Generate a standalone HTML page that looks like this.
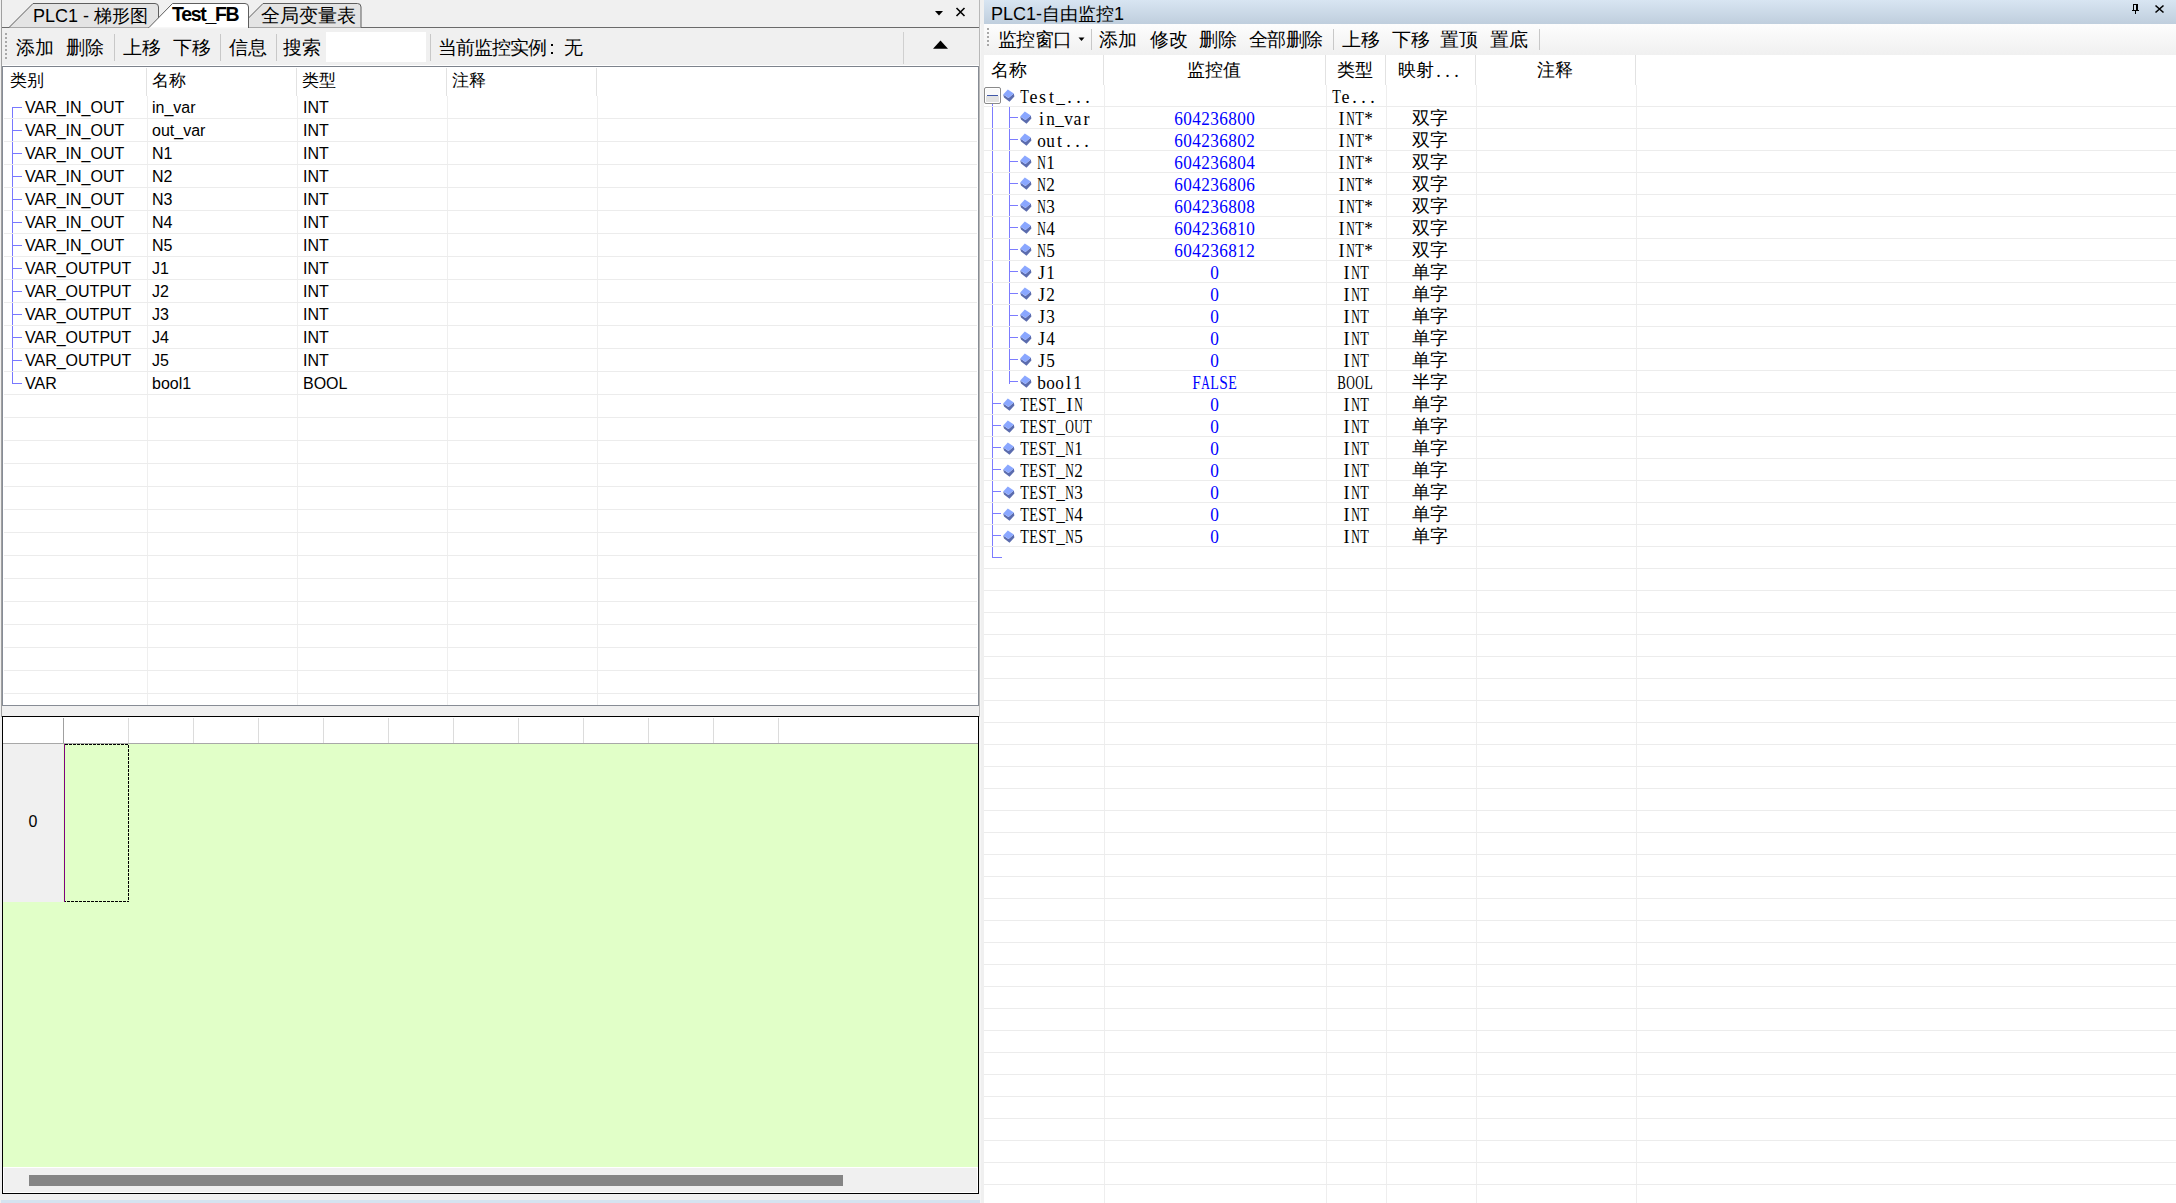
<!DOCTYPE html>
<html><head><meta charset="utf-8"><title>PLC</title>
<style>
html,body{margin:0;padding:0;}
body{width:2176px;height:1203px;overflow:hidden;position:relative;background:#f0f0f0;font-family:"Liberation Sans",sans-serif;color:#000;}
div{position:absolute;box-sizing:border-box;}
.tb{font-size:18px;line-height:24px;white-space:nowrap;}
.bt{font-size:19px;line-height:24px;white-space:nowrap;}
.lt{font-size:16px;line-height:23px;white-space:nowrap;}
.lh{font-size:16px;line-height:22px;white-space:nowrap;}
.rm{font-family:"Liberation Mono",monospace;font-size:18px;line-height:22px;white-space:nowrap;transform:scaleX(0.8333);transform-origin:0 0;}
.rc{font-size:18px;line-height:22px;white-space:nowrap;}
.blue{color:#0000ff;}
.rd{font-family:"Liberation Serif",serif;font-size:18px;line-height:22px;white-space:nowrap;}
svg{position:absolute;}
</style></head><body>

<div style="left:1px;top:0px;width:1px;height:717px;background:#a0a0a0"></div>
<svg style="left:0;top:0" width="980" height="30" viewBox="0 0 980 30">
<path d="M2 27.5 H979" stroke="#6a6a6a" stroke-width="1" fill="none"/>
<path d="M9 27.5 L33 3.5 H155 Q158.5 3.5 158.5 7 V27.5" fill="#e4e4e4" stroke="#5e5e5e" stroke-width="1"/>
<path d="M239 27.5 L263 3.5 H357.5 Q361 3.5 361 7 V27.5" fill="#e4e4e4" stroke="#5e5e5e" stroke-width="1"/>
<path d="M148.5 28 L172.5 3.5 H245 Q248.5 3.5 248.5 7 V28" fill="#ffffff" stroke="#5e5e5e" stroke-width="1"/>
<path d="M149.5 28 H248" stroke="#f4f4f4" stroke-width="1.5"/>
<path d="M935 11 H943 L939 15.5 Z" fill="#000"/>
<path d="M956.5 8 L964.5 16 M964.5 8 L956.5 16" stroke="#000" stroke-width="1.6"/>
</svg>
<div class="tb" style="left:33px;top:4px;">PLC1 - 梯形图</div>
<div class="tb" style="left:172px;top:2px;font-weight:bold;font-size:19.5px;letter-spacing:-1.3px">Test_FB</div>
<div class="tb" style="left:261px;top:4px;font-size:18.5px">全局变量表</div>
<div style="left:5px;top:33px;width:2px;height:2px;background:#a8a8a8"></div>
<div style="left:5px;top:37px;width:2px;height:2px;background:#a8a8a8"></div>
<div style="left:5px;top:41px;width:2px;height:2px;background:#a8a8a8"></div>
<div style="left:5px;top:45px;width:2px;height:2px;background:#a8a8a8"></div>
<div style="left:5px;top:49px;width:2px;height:2px;background:#a8a8a8"></div>
<div style="left:5px;top:53px;width:2px;height:2px;background:#a8a8a8"></div>
<div style="left:5px;top:57px;width:2px;height:2px;background:#a8a8a8"></div>
<div class="bt" style="left:16px;top:36px;">添加</div>
<div class="bt" style="left:66px;top:36px;">删除</div>
<div class="bt" style="left:123px;top:36px;">上移</div>
<div class="bt" style="left:173px;top:36px;">下移</div>
<div class="bt" style="left:229px;top:36px;">信息</div>
<div class="bt" style="left:283px;top:36px;">搜索</div>
<div class="bt" style="left:438px;top:36px;letter-spacing:-1.1px">当前监控实例</div>
<div style="left:550.5px;top:44px;width:2px;height:2px;background:#000"></div>
<div style="left:550.5px;top:52px;width:2px;height:2px;background:#000"></div>
<div class="bt" style="left:564px;top:36px;">无</div>
<div style="left:114px;top:34px;width:1px;height:27px;background:#c8c8c8"></div>
<div style="left:220px;top:34px;width:1px;height:27px;background:#c8c8c8"></div>
<div style="left:276px;top:34px;width:1px;height:27px;background:#c8c8c8"></div>
<div style="left:430px;top:34px;width:1px;height:27px;background:#c8c8c8"></div>
<div style="left:903px;top:32px;width:1px;height:32px;background:#d0d0d0"></div>
<div style="left:326px;top:32px;width:100px;height:30px;background:#ffffff"></div>
<svg style="left:930px;top:38px" width="20" height="14"><path d="M3 10.8 L10.5 2.5 L18 10.8 Z" fill="#000"/></svg>
<div style="left:2px;top:65px;width:977px;height:1px;background:#ffffff"></div>
<div style="left:2px;top:66px;width:977px;height:1px;background:#7d838c"></div>
<div style="left:2px;top:67px;width:976px;height:638px;background:#ffffff"></div>
<div style="left:2px;top:66px;width:1px;height:640px;background:#868c96"></div>
<div style="left:978px;top:66px;width:1px;height:640px;background:#878c95"></div>
<div style="left:2px;top:705px;width:977px;height:1px;background:#878c95"></div>
<div style="left:979px;top:0px;width:1px;height:717px;background:#b8b8b8"></div>
<div style="left:10px;top:70px;font-size:17px;line-height:22px">类别</div>
<div style="left:152px;top:70px;font-size:17px;line-height:22px">名称</div>
<div style="left:302px;top:70px;font-size:17px;line-height:22px">类型</div>
<div style="left:452px;top:70px;font-size:17px;line-height:22px">注释</div>
<div style="left:146px;top:68px;width:1px;height:28px;background:#e2e2e2"></div>
<div style="left:296px;top:68px;width:1px;height:28px;background:#e2e2e2"></div>
<div style="left:446px;top:68px;width:1px;height:28px;background:#e2e2e2"></div>
<div style="left:596px;top:68px;width:1px;height:28px;background:#e2e2e2"></div>
<div style="left:147px;top:96px;width:1px;height:609px;background:#efefef"></div>
<div style="left:297px;top:96px;width:1px;height:609px;background:#efefef"></div>
<div style="left:447px;top:96px;width:1px;height:609px;background:#efefef"></div>
<div style="left:597px;top:96px;width:1px;height:609px;background:#efefef"></div>
<div style="left:4px;top:118px;width:973px;height:1px;background:#ececec"></div>
<div style="left:4px;top:141px;width:973px;height:1px;background:#ececec"></div>
<div style="left:4px;top:164px;width:973px;height:1px;background:#ececec"></div>
<div style="left:4px;top:187px;width:973px;height:1px;background:#ececec"></div>
<div style="left:4px;top:210px;width:973px;height:1px;background:#ececec"></div>
<div style="left:4px;top:233px;width:973px;height:1px;background:#ececec"></div>
<div style="left:4px;top:256px;width:973px;height:1px;background:#ececec"></div>
<div style="left:4px;top:279px;width:973px;height:1px;background:#ececec"></div>
<div style="left:4px;top:302px;width:973px;height:1px;background:#ececec"></div>
<div style="left:4px;top:325px;width:973px;height:1px;background:#ececec"></div>
<div style="left:4px;top:348px;width:973px;height:1px;background:#ececec"></div>
<div style="left:4px;top:371px;width:973px;height:1px;background:#ececec"></div>
<div style="left:4px;top:394px;width:973px;height:1px;background:#ececec"></div>
<div style="left:4px;top:417px;width:973px;height:1px;background:#ececec"></div>
<div style="left:4px;top:440px;width:973px;height:1px;background:#ececec"></div>
<div style="left:4px;top:463px;width:973px;height:1px;background:#ececec"></div>
<div style="left:4px;top:486px;width:973px;height:1px;background:#ececec"></div>
<div style="left:4px;top:509px;width:973px;height:1px;background:#ececec"></div>
<div style="left:4px;top:532px;width:973px;height:1px;background:#ececec"></div>
<div style="left:4px;top:555px;width:973px;height:1px;background:#ececec"></div>
<div style="left:4px;top:578px;width:973px;height:1px;background:#ececec"></div>
<div style="left:4px;top:601px;width:973px;height:1px;background:#ececec"></div>
<div style="left:4px;top:624px;width:973px;height:1px;background:#ececec"></div>
<div style="left:4px;top:647px;width:973px;height:1px;background:#ececec"></div>
<div style="left:4px;top:670px;width:973px;height:1px;background:#ececec"></div>
<div style="left:4px;top:693px;width:973px;height:1px;background:#ececec"></div>
<div class="lt" style="left:25px;top:96px;">VAR_IN_OUT</div>
<div class="lt" style="left:152px;top:96px;">in_var</div>
<div class="lt" style="left:303px;top:96px;">INT</div>
<div style="left:12px;top:107px;width:10px;height:1px;background:#7878ff"></div>
<div class="lt" style="left:25px;top:119px;">VAR_IN_OUT</div>
<div class="lt" style="left:152px;top:119px;">out_var</div>
<div class="lt" style="left:303px;top:119px;">INT</div>
<div style="left:12px;top:130px;width:10px;height:1px;background:#7878ff"></div>
<div class="lt" style="left:25px;top:142px;">VAR_IN_OUT</div>
<div class="lt" style="left:152px;top:142px;">N1</div>
<div class="lt" style="left:303px;top:142px;">INT</div>
<div style="left:12px;top:153px;width:10px;height:1px;background:#7878ff"></div>
<div class="lt" style="left:25px;top:165px;">VAR_IN_OUT</div>
<div class="lt" style="left:152px;top:165px;">N2</div>
<div class="lt" style="left:303px;top:165px;">INT</div>
<div style="left:12px;top:176px;width:10px;height:1px;background:#7878ff"></div>
<div class="lt" style="left:25px;top:188px;">VAR_IN_OUT</div>
<div class="lt" style="left:152px;top:188px;">N3</div>
<div class="lt" style="left:303px;top:188px;">INT</div>
<div style="left:12px;top:199px;width:10px;height:1px;background:#7878ff"></div>
<div class="lt" style="left:25px;top:211px;">VAR_IN_OUT</div>
<div class="lt" style="left:152px;top:211px;">N4</div>
<div class="lt" style="left:303px;top:211px;">INT</div>
<div style="left:12px;top:222px;width:10px;height:1px;background:#7878ff"></div>
<div class="lt" style="left:25px;top:234px;">VAR_IN_OUT</div>
<div class="lt" style="left:152px;top:234px;">N5</div>
<div class="lt" style="left:303px;top:234px;">INT</div>
<div style="left:12px;top:245px;width:10px;height:1px;background:#7878ff"></div>
<div class="lt" style="left:25px;top:257px;">VAR_OUTPUT</div>
<div class="lt" style="left:152px;top:257px;">J1</div>
<div class="lt" style="left:303px;top:257px;">INT</div>
<div style="left:12px;top:268px;width:10px;height:1px;background:#7878ff"></div>
<div class="lt" style="left:25px;top:280px;">VAR_OUTPUT</div>
<div class="lt" style="left:152px;top:280px;">J2</div>
<div class="lt" style="left:303px;top:280px;">INT</div>
<div style="left:12px;top:291px;width:10px;height:1px;background:#7878ff"></div>
<div class="lt" style="left:25px;top:303px;">VAR_OUTPUT</div>
<div class="lt" style="left:152px;top:303px;">J3</div>
<div class="lt" style="left:303px;top:303px;">INT</div>
<div style="left:12px;top:314px;width:10px;height:1px;background:#7878ff"></div>
<div class="lt" style="left:25px;top:326px;">VAR_OUTPUT</div>
<div class="lt" style="left:152px;top:326px;">J4</div>
<div class="lt" style="left:303px;top:326px;">INT</div>
<div style="left:12px;top:337px;width:10px;height:1px;background:#7878ff"></div>
<div class="lt" style="left:25px;top:349px;">VAR_OUTPUT</div>
<div class="lt" style="left:152px;top:349px;">J5</div>
<div class="lt" style="left:303px;top:349px;">INT</div>
<div style="left:12px;top:360px;width:10px;height:1px;background:#7878ff"></div>
<div class="lt" style="left:25px;top:372px;">VAR</div>
<div class="lt" style="left:152px;top:372px;">bool1</div>
<div class="lt" style="left:303px;top:372px;">BOOL</div>
<div style="left:12px;top:383px;width:10px;height:1px;background:#7878ff"></div>
<div style="left:12px;top:107px;width:1px;height:277px;background:#7878ff"></div>
<div style="left:12px;top:118px;width:1px;height:1px;background:#ececec"></div>
<div style="left:12px;top:141px;width:1px;height:1px;background:#ececec"></div>
<div style="left:12px;top:164px;width:1px;height:1px;background:#ececec"></div>
<div style="left:12px;top:187px;width:1px;height:1px;background:#ececec"></div>
<div style="left:12px;top:210px;width:1px;height:1px;background:#ececec"></div>
<div style="left:12px;top:233px;width:1px;height:1px;background:#ececec"></div>
<div style="left:12px;top:256px;width:1px;height:1px;background:#ececec"></div>
<div style="left:12px;top:279px;width:1px;height:1px;background:#ececec"></div>
<div style="left:12px;top:302px;width:1px;height:1px;background:#ececec"></div>
<div style="left:12px;top:325px;width:1px;height:1px;background:#ececec"></div>
<div style="left:12px;top:348px;width:1px;height:1px;background:#ececec"></div>
<div style="left:12px;top:371px;width:1px;height:1px;background:#ececec"></div>
<div style="left:2px;top:716px;width:977px;height:478px;background:#000"></div>
<div style="left:3px;top:717px;width:975px;height:476px;background:#ffffff"></div>
<div style="left:4px;top:718px;width:973px;height:25px;background:#ffffff"></div>
<div style="left:3px;top:743px;width:975px;height:1px;background:#a8a8a8"></div>
<div style="left:63px;top:718px;width:1px;height:25px;background:#a0a0a0"></div>
<div style="left:128px;top:718px;width:1px;height:25px;background:#dcdcdc"></div>
<div style="left:193px;top:718px;width:1px;height:25px;background:#dcdcdc"></div>
<div style="left:258px;top:718px;width:1px;height:25px;background:#dcdcdc"></div>
<div style="left:323px;top:718px;width:1px;height:25px;background:#dcdcdc"></div>
<div style="left:388px;top:718px;width:1px;height:25px;background:#dcdcdc"></div>
<div style="left:453px;top:718px;width:1px;height:25px;background:#dcdcdc"></div>
<div style="left:518px;top:718px;width:1px;height:25px;background:#dcdcdc"></div>
<div style="left:583px;top:718px;width:1px;height:25px;background:#dcdcdc"></div>
<div style="left:648px;top:718px;width:1px;height:25px;background:#dcdcdc"></div>
<div style="left:713px;top:718px;width:1px;height:25px;background:#dcdcdc"></div>
<div style="left:778px;top:718px;width:1px;height:25px;background:#dcdcdc"></div>
<div style="left:3px;top:744px;width:975px;height:423px;background:#e1ffc8"></div>
<div style="left:3px;top:744px;width:60px;height:158px;background:#f0f0f0"></div>
<div style="left:3px;top:810px;width:60px;text-align:center;font-size:16px;line-height:24px">0</div>
<svg style="left:60px;top:740px" width="75" height="170"><path d="M4.5 4.5 H68.5 V161.5 H4.5" fill="none" stroke="#000" stroke-width="1" stroke-dasharray="3 1" shape-rendering="crispEdges"/><path d="M4.5 4 V162" stroke="#800080" stroke-width="1" shape-rendering="crispEdges"/></svg>
<div style="left:3px;top:1167px;width:975px;height:1px;background:#ffffff"></div>
<div style="left:4px;top:1168px;width:973px;height:24px;background:#f0f0f0"></div>
<div style="left:29px;top:1175px;width:814px;height:11px;background:#858585"></div>
<div style="left:1px;top:1200px;width:979px;height:3px;background:#d5e3f0"></div>
<div style="left:980px;top:0px;width:4px;height:1203px;background:#f0f0f0"></div>
<div style="left:980px;top:24px;width:1px;height:1179px;background:#f6f6f6"></div>
<div style="left:984px;top:0px;width:1192px;height:24px;background:linear-gradient(#d8e5f2,#bfcedd)"></div>
<div class="tb" style="left:991px;top:2px;">PLC1-自由监控1</div>
<svg style="left:2125px;top:0" width="51" height="24">
<g shape-rendering="crispEdges"><rect x="8" y="4" width="5" height="6" fill="#000"/><rect x="9" y="5" width="2" height="5" fill="#d3dfeb"/><rect x="7" y="10" width="7" height="1" fill="#000"/><rect x="10" y="11" width="1" height="3" fill="#000"/></g>
<path d="M30.5 5.5 L38.5 12.5 M38.5 5.5 L30.5 12.5" stroke="#000" stroke-width="1.6"/>
</svg>
<div style="left:984px;top:24px;width:1192px;height:31px;background:linear-gradient(#fdfdfd,#f0f0f0)"></div>
<div style="left:987px;top:28px;width:2px;height:2px;background:#a8a8a8"></div>
<div style="left:987px;top:32px;width:2px;height:2px;background:#a8a8a8"></div>
<div style="left:987px;top:36px;width:2px;height:2px;background:#a8a8a8"></div>
<div style="left:987px;top:40px;width:2px;height:2px;background:#a8a8a8"></div>
<div style="left:987px;top:44px;width:2px;height:2px;background:#a8a8a8"></div>
<div class="bt" style="left:998px;top:28px;letter-spacing:-0.6px">监控窗口</div>
<div class="bt" style="left:1099px;top:28px;">添加</div>
<div class="bt" style="left:1150px;top:28px;">修改</div>
<div class="bt" style="left:1199px;top:28px;">删除</div>
<div class="bt" style="left:1249px;top:28px;letter-spacing:-0.6px">全部删除</div>
<div class="bt" style="left:1342px;top:28px;">上移</div>
<div class="bt" style="left:1392px;top:28px;">下移</div>
<div class="bt" style="left:1440px;top:28px;">置顶</div>
<div class="bt" style="left:1490px;top:28px;">置底</div>
<svg style="left:1076px;top:34px" width="12" height="10"><path d="M2.5 3.5 H8.5 L5.5 7 Z" fill="#000"/></svg>
<div style="left:1091px;top:29px;width:1px;height:21px;background:#c8c8c8"></div>
<div style="left:1333px;top:29px;width:1px;height:21px;background:#c8c8c8"></div>
<div style="left:1539px;top:29px;width:1px;height:21px;background:#c8c8c8"></div>
<div style="left:984px;top:55px;width:1192px;height:1148px;background:#ffffff"></div>
<div style="left:1103px;top:55px;width:1px;height:30px;background:#e2e2e2"></div>
<div style="left:1325px;top:55px;width:1px;height:30px;background:#e2e2e2"></div>
<div style="left:1385px;top:55px;width:1px;height:30px;background:#e2e2e2"></div>
<div style="left:1475px;top:55px;width:1px;height:30px;background:#e2e2e2"></div>
<div style="left:1635px;top:55px;width:1px;height:30px;background:#e2e2e2"></div>
<div style="left:1104px;top:85px;width:1px;height:1118px;background:#eeeeee"></div>
<div style="left:1326px;top:85px;width:1px;height:1118px;background:#eeeeee"></div>
<div style="left:1386px;top:85px;width:1px;height:1118px;background:#eeeeee"></div>
<div style="left:1476px;top:85px;width:1px;height:1118px;background:#eeeeee"></div>
<div style="left:1636px;top:85px;width:1px;height:1118px;background:#eeeeee"></div>
<div style="left:984px;top:106px;width:1192px;height:1px;background:#ececec"></div>
<div style="left:984px;top:128px;width:1192px;height:1px;background:#ececec"></div>
<div style="left:984px;top:150px;width:1192px;height:1px;background:#ececec"></div>
<div style="left:984px;top:172px;width:1192px;height:1px;background:#ececec"></div>
<div style="left:984px;top:194px;width:1192px;height:1px;background:#ececec"></div>
<div style="left:984px;top:216px;width:1192px;height:1px;background:#ececec"></div>
<div style="left:984px;top:238px;width:1192px;height:1px;background:#ececec"></div>
<div style="left:984px;top:260px;width:1192px;height:1px;background:#ececec"></div>
<div style="left:984px;top:282px;width:1192px;height:1px;background:#ececec"></div>
<div style="left:984px;top:304px;width:1192px;height:1px;background:#ececec"></div>
<div style="left:984px;top:326px;width:1192px;height:1px;background:#ececec"></div>
<div style="left:984px;top:348px;width:1192px;height:1px;background:#ececec"></div>
<div style="left:984px;top:370px;width:1192px;height:1px;background:#ececec"></div>
<div style="left:984px;top:392px;width:1192px;height:1px;background:#ececec"></div>
<div style="left:984px;top:414px;width:1192px;height:1px;background:#ececec"></div>
<div style="left:984px;top:436px;width:1192px;height:1px;background:#ececec"></div>
<div style="left:984px;top:458px;width:1192px;height:1px;background:#ececec"></div>
<div style="left:984px;top:480px;width:1192px;height:1px;background:#ececec"></div>
<div style="left:984px;top:502px;width:1192px;height:1px;background:#ececec"></div>
<div style="left:984px;top:524px;width:1192px;height:1px;background:#ececec"></div>
<div style="left:984px;top:546px;width:1192px;height:1px;background:#ececec"></div>
<div style="left:984px;top:568px;width:1192px;height:1px;background:#ececec"></div>
<div style="left:984px;top:590px;width:1192px;height:1px;background:#ececec"></div>
<div style="left:984px;top:612px;width:1192px;height:1px;background:#ececec"></div>
<div style="left:984px;top:634px;width:1192px;height:1px;background:#ececec"></div>
<div style="left:984px;top:656px;width:1192px;height:1px;background:#ececec"></div>
<div style="left:984px;top:678px;width:1192px;height:1px;background:#ececec"></div>
<div style="left:984px;top:700px;width:1192px;height:1px;background:#ececec"></div>
<div style="left:984px;top:722px;width:1192px;height:1px;background:#ececec"></div>
<div style="left:984px;top:744px;width:1192px;height:1px;background:#ececec"></div>
<div style="left:984px;top:766px;width:1192px;height:1px;background:#ececec"></div>
<div style="left:984px;top:788px;width:1192px;height:1px;background:#ececec"></div>
<div style="left:984px;top:810px;width:1192px;height:1px;background:#ececec"></div>
<div style="left:984px;top:832px;width:1192px;height:1px;background:#ececec"></div>
<div style="left:984px;top:854px;width:1192px;height:1px;background:#ececec"></div>
<div style="left:984px;top:876px;width:1192px;height:1px;background:#ececec"></div>
<div style="left:984px;top:898px;width:1192px;height:1px;background:#ececec"></div>
<div style="left:984px;top:920px;width:1192px;height:1px;background:#ececec"></div>
<div style="left:984px;top:942px;width:1192px;height:1px;background:#ececec"></div>
<div style="left:984px;top:964px;width:1192px;height:1px;background:#ececec"></div>
<div style="left:984px;top:986px;width:1192px;height:1px;background:#ececec"></div>
<div style="left:984px;top:1008px;width:1192px;height:1px;background:#ececec"></div>
<div style="left:984px;top:1030px;width:1192px;height:1px;background:#ececec"></div>
<div style="left:984px;top:1052px;width:1192px;height:1px;background:#ececec"></div>
<div style="left:984px;top:1074px;width:1192px;height:1px;background:#ececec"></div>
<div style="left:984px;top:1096px;width:1192px;height:1px;background:#ececec"></div>
<div style="left:984px;top:1118px;width:1192px;height:1px;background:#ececec"></div>
<div style="left:984px;top:1140px;width:1192px;height:1px;background:#ececec"></div>
<div style="left:984px;top:1162px;width:1192px;height:1px;background:#ececec"></div>
<div style="left:984px;top:1184px;width:1192px;height:1px;background:#ececec"></div>
<div class="rc" style="left:991px;top:59px;">名称</div>
<div class="rc" style="left:1187px;top:59px;">监控值</div>
<div class="rc" style="left:1337px;top:59px;">类型</div>
<div class="rc" style="left:1398px;top:59px;">映射</div>
<svg style="left:1434px;top:59px" width="31" height="22" font-family="Liberation Serif" font-size="18" fill="#000"><text transform="translate(4.5 0) scale(1.000 1)" x="-2.25" y="17.6">.</text><text transform="translate(13.5 0) scale(1.000 1)" x="-2.25" y="17.6">.</text><text transform="translate(22.5 0) scale(1.000 1)" x="-2.25" y="17.6">.</text></svg>
<div class="rc" style="left:1537px;top:59px;">注释</div>
<div style="left:984px;top:87px;width:17px;height:17px;border:1px solid #8a8a8a;border-radius:2px;background:#fff"></div>
<div style="left:986px;top:89px;width:13px;height:7px;background:#fafafa"></div>
<div style="left:986px;top:96px;width:13px;height:6px;background:#e3e3e3"></div>
<div style="left:987px;top:95px;width:11px;height:1px;background:#4058a8"></div>
<svg style="left:1003px;top:89.3px" width="13" height="14"><path d="M0.2 5.5 L5.5 9 L10.8 4.5 L11.4 7.5 L6.5 12.8 L1 8.5 Z" fill="#5b6cae"/><path d="M4.8 0.6 L10.8 4.5 L5.5 9 L0.2 5.5 Z" fill="#8aa7ff"/></svg>
<svg style="left:1020px;top:85px" width="76" height="22" font-family="Liberation Serif" font-size="18" fill="#000"><text transform="translate(4.5 0) scale(0.782 1)" x="-5.5" y="17.6">T</text><text transform="translate(13.5 0) scale(1.000 1)" x="-4.0" y="17.6">e</text><text transform="translate(22.5 0) scale(1.000 1)" x="-3.5078125" y="17.6">s</text><text transform="translate(31.5 0) scale(1.000 1)" x="-2.5078125" y="17.6">t</text><text transform="translate(40.5 0) scale(0.956 1)" x="-4.5" y="17.6">_</text><text transform="translate(49.5 0) scale(1.000 1)" x="-2.25" y="17.6">.</text><text transform="translate(58.5 0) scale(1.000 1)" x="-2.25" y="17.6">.</text><text transform="translate(67.5 0) scale(1.000 1)" x="-2.25" y="17.6">.</text></svg>
<svg style="left:1332px;top:85px" width="49" height="22" font-family="Liberation Serif" font-size="18" fill="#000"><text transform="translate(4.5 0) scale(0.782 1)" x="-5.5" y="17.6">T</text><text transform="translate(13.5 0) scale(1.000 1)" x="-4.0" y="17.6">e</text><text transform="translate(22.5 0) scale(1.000 1)" x="-2.25" y="17.6">.</text><text transform="translate(31.5 0) scale(1.000 1)" x="-2.25" y="17.6">.</text><text transform="translate(40.5 0) scale(1.000 1)" x="-2.25" y="17.6">.</text></svg>
<div style="left:1009px;top:117px;width:9px;height:1px;background:#7c7cff"></div>
<svg style="left:1020px;top:111px" width="13" height="14"><path d="M0.2 5.5 L5.5 9 L10.8 4.5 L11.4 7.5 L6.5 12.8 L1 8.5 Z" fill="#5b6cae"/><path d="M4.8 0.6 L10.8 4.5 L5.5 9 L0.2 5.5 Z" fill="#8aa7ff"/></svg>
<svg style="left:1037px;top:107px" width="58" height="22" font-family="Liberation Serif" font-size="18" fill="#000"><text transform="translate(4.5 0) scale(1.000 1)" x="-2.5078125" y="17.6">i</text><text transform="translate(13.5 0) scale(0.956 1)" x="-4.5" y="17.6">n</text><text transform="translate(22.5 0) scale(0.956 1)" x="-4.5" y="17.6">_</text><text transform="translate(31.5 0) scale(0.956 1)" x="-4.5" y="17.6">v</text><text transform="translate(40.5 0) scale(1.000 1)" x="-4.0" y="17.6">a</text><text transform="translate(49.5 0) scale(1.000 1)" x="-3.0" y="17.6">r</text></svg>
<svg style="left:1174px;top:107px" width="85" height="22" font-family="Liberation Serif" font-size="18" fill="#0000ff"><text transform="translate(4.5 0) scale(0.956 1)" x="-4.5" y="17.6">6</text><text transform="translate(13.5 0) scale(0.956 1)" x="-4.5" y="17.6">0</text><text transform="translate(22.5 0) scale(0.956 1)" x="-4.5" y="17.6">4</text><text transform="translate(31.5 0) scale(0.956 1)" x="-4.5" y="17.6">2</text><text transform="translate(40.5 0) scale(0.956 1)" x="-4.5" y="17.6">3</text><text transform="translate(49.5 0) scale(0.956 1)" x="-4.5" y="17.6">6</text><text transform="translate(58.5 0) scale(0.956 1)" x="-4.5" y="17.6">8</text><text transform="translate(67.5 0) scale(0.956 1)" x="-4.5" y="17.6">0</text><text transform="translate(76.5 0) scale(0.956 1)" x="-4.5" y="17.6">0</text></svg>
<svg style="left:1337px;top:107px" width="40" height="22" font-family="Liberation Serif" font-size="18" fill="#000"><text transform="translate(4.5 0) scale(1.000 1)" x="-3.0" y="17.6">I</text><text transform="translate(13.5 0) scale(0.662 1)" x="-6.5" y="17.6">N</text><text transform="translate(22.5 0) scale(0.782 1)" x="-5.5" y="17.6">T</text><text transform="translate(31.5 0) scale(0.956 1)" x="-4.5" y="17.6">*</text></svg>
<div class="rc" style="left:1412px;top:107px;">双字</div>
<div style="left:1009px;top:139px;width:9px;height:1px;background:#7c7cff"></div>
<svg style="left:1020px;top:133px" width="13" height="14"><path d="M0.2 5.5 L5.5 9 L10.8 4.5 L11.4 7.5 L6.5 12.8 L1 8.5 Z" fill="#5b6cae"/><path d="M4.8 0.6 L10.8 4.5 L5.5 9 L0.2 5.5 Z" fill="#8aa7ff"/></svg>
<svg style="left:1037px;top:129px" width="58" height="22" font-family="Liberation Serif" font-size="18" fill="#000"><text transform="translate(4.5 0) scale(0.956 1)" x="-4.5" y="17.6">o</text><text transform="translate(13.5 0) scale(0.956 1)" x="-4.5" y="17.6">u</text><text transform="translate(22.5 0) scale(1.000 1)" x="-2.5078125" y="17.6">t</text><text transform="translate(31.5 0) scale(1.000 1)" x="-2.25" y="17.6">.</text><text transform="translate(40.5 0) scale(1.000 1)" x="-2.25" y="17.6">.</text><text transform="translate(49.5 0) scale(1.000 1)" x="-2.25" y="17.6">.</text></svg>
<svg style="left:1174px;top:129px" width="85" height="22" font-family="Liberation Serif" font-size="18" fill="#0000ff"><text transform="translate(4.5 0) scale(0.956 1)" x="-4.5" y="17.6">6</text><text transform="translate(13.5 0) scale(0.956 1)" x="-4.5" y="17.6">0</text><text transform="translate(22.5 0) scale(0.956 1)" x="-4.5" y="17.6">4</text><text transform="translate(31.5 0) scale(0.956 1)" x="-4.5" y="17.6">2</text><text transform="translate(40.5 0) scale(0.956 1)" x="-4.5" y="17.6">3</text><text transform="translate(49.5 0) scale(0.956 1)" x="-4.5" y="17.6">6</text><text transform="translate(58.5 0) scale(0.956 1)" x="-4.5" y="17.6">8</text><text transform="translate(67.5 0) scale(0.956 1)" x="-4.5" y="17.6">0</text><text transform="translate(76.5 0) scale(0.956 1)" x="-4.5" y="17.6">2</text></svg>
<svg style="left:1337px;top:129px" width="40" height="22" font-family="Liberation Serif" font-size="18" fill="#000"><text transform="translate(4.5 0) scale(1.000 1)" x="-3.0" y="17.6">I</text><text transform="translate(13.5 0) scale(0.662 1)" x="-6.5" y="17.6">N</text><text transform="translate(22.5 0) scale(0.782 1)" x="-5.5" y="17.6">T</text><text transform="translate(31.5 0) scale(0.956 1)" x="-4.5" y="17.6">*</text></svg>
<div class="rc" style="left:1412px;top:129px;">双字</div>
<div style="left:1009px;top:161px;width:9px;height:1px;background:#7c7cff"></div>
<svg style="left:1020px;top:155px" width="13" height="14"><path d="M0.2 5.5 L5.5 9 L10.8 4.5 L11.4 7.5 L6.5 12.8 L1 8.5 Z" fill="#5b6cae"/><path d="M4.8 0.6 L10.8 4.5 L5.5 9 L0.2 5.5 Z" fill="#8aa7ff"/></svg>
<svg style="left:1037px;top:151px" width="22" height="22" font-family="Liberation Serif" font-size="18" fill="#000"><text transform="translate(4.5 0) scale(0.662 1)" x="-6.5" y="17.6">N</text><text transform="translate(13.5 0) scale(0.956 1)" x="-4.5" y="17.6">1</text></svg>
<svg style="left:1174px;top:151px" width="85" height="22" font-family="Liberation Serif" font-size="18" fill="#0000ff"><text transform="translate(4.5 0) scale(0.956 1)" x="-4.5" y="17.6">6</text><text transform="translate(13.5 0) scale(0.956 1)" x="-4.5" y="17.6">0</text><text transform="translate(22.5 0) scale(0.956 1)" x="-4.5" y="17.6">4</text><text transform="translate(31.5 0) scale(0.956 1)" x="-4.5" y="17.6">2</text><text transform="translate(40.5 0) scale(0.956 1)" x="-4.5" y="17.6">3</text><text transform="translate(49.5 0) scale(0.956 1)" x="-4.5" y="17.6">6</text><text transform="translate(58.5 0) scale(0.956 1)" x="-4.5" y="17.6">8</text><text transform="translate(67.5 0) scale(0.956 1)" x="-4.5" y="17.6">0</text><text transform="translate(76.5 0) scale(0.956 1)" x="-4.5" y="17.6">4</text></svg>
<svg style="left:1337px;top:151px" width="40" height="22" font-family="Liberation Serif" font-size="18" fill="#000"><text transform="translate(4.5 0) scale(1.000 1)" x="-3.0" y="17.6">I</text><text transform="translate(13.5 0) scale(0.662 1)" x="-6.5" y="17.6">N</text><text transform="translate(22.5 0) scale(0.782 1)" x="-5.5" y="17.6">T</text><text transform="translate(31.5 0) scale(0.956 1)" x="-4.5" y="17.6">*</text></svg>
<div class="rc" style="left:1412px;top:151px;">双字</div>
<div style="left:1009px;top:183px;width:9px;height:1px;background:#7c7cff"></div>
<svg style="left:1020px;top:177px" width="13" height="14"><path d="M0.2 5.5 L5.5 9 L10.8 4.5 L11.4 7.5 L6.5 12.8 L1 8.5 Z" fill="#5b6cae"/><path d="M4.8 0.6 L10.8 4.5 L5.5 9 L0.2 5.5 Z" fill="#8aa7ff"/></svg>
<svg style="left:1037px;top:173px" width="22" height="22" font-family="Liberation Serif" font-size="18" fill="#000"><text transform="translate(4.5 0) scale(0.662 1)" x="-6.5" y="17.6">N</text><text transform="translate(13.5 0) scale(0.956 1)" x="-4.5" y="17.6">2</text></svg>
<svg style="left:1174px;top:173px" width="85" height="22" font-family="Liberation Serif" font-size="18" fill="#0000ff"><text transform="translate(4.5 0) scale(0.956 1)" x="-4.5" y="17.6">6</text><text transform="translate(13.5 0) scale(0.956 1)" x="-4.5" y="17.6">0</text><text transform="translate(22.5 0) scale(0.956 1)" x="-4.5" y="17.6">4</text><text transform="translate(31.5 0) scale(0.956 1)" x="-4.5" y="17.6">2</text><text transform="translate(40.5 0) scale(0.956 1)" x="-4.5" y="17.6">3</text><text transform="translate(49.5 0) scale(0.956 1)" x="-4.5" y="17.6">6</text><text transform="translate(58.5 0) scale(0.956 1)" x="-4.5" y="17.6">8</text><text transform="translate(67.5 0) scale(0.956 1)" x="-4.5" y="17.6">0</text><text transform="translate(76.5 0) scale(0.956 1)" x="-4.5" y="17.6">6</text></svg>
<svg style="left:1337px;top:173px" width="40" height="22" font-family="Liberation Serif" font-size="18" fill="#000"><text transform="translate(4.5 0) scale(1.000 1)" x="-3.0" y="17.6">I</text><text transform="translate(13.5 0) scale(0.662 1)" x="-6.5" y="17.6">N</text><text transform="translate(22.5 0) scale(0.782 1)" x="-5.5" y="17.6">T</text><text transform="translate(31.5 0) scale(0.956 1)" x="-4.5" y="17.6">*</text></svg>
<div class="rc" style="left:1412px;top:173px;">双字</div>
<div style="left:1009px;top:205px;width:9px;height:1px;background:#7c7cff"></div>
<svg style="left:1020px;top:199px" width="13" height="14"><path d="M0.2 5.5 L5.5 9 L10.8 4.5 L11.4 7.5 L6.5 12.8 L1 8.5 Z" fill="#5b6cae"/><path d="M4.8 0.6 L10.8 4.5 L5.5 9 L0.2 5.5 Z" fill="#8aa7ff"/></svg>
<svg style="left:1037px;top:195px" width="22" height="22" font-family="Liberation Serif" font-size="18" fill="#000"><text transform="translate(4.5 0) scale(0.662 1)" x="-6.5" y="17.6">N</text><text transform="translate(13.5 0) scale(0.956 1)" x="-4.5" y="17.6">3</text></svg>
<svg style="left:1174px;top:195px" width="85" height="22" font-family="Liberation Serif" font-size="18" fill="#0000ff"><text transform="translate(4.5 0) scale(0.956 1)" x="-4.5" y="17.6">6</text><text transform="translate(13.5 0) scale(0.956 1)" x="-4.5" y="17.6">0</text><text transform="translate(22.5 0) scale(0.956 1)" x="-4.5" y="17.6">4</text><text transform="translate(31.5 0) scale(0.956 1)" x="-4.5" y="17.6">2</text><text transform="translate(40.5 0) scale(0.956 1)" x="-4.5" y="17.6">3</text><text transform="translate(49.5 0) scale(0.956 1)" x="-4.5" y="17.6">6</text><text transform="translate(58.5 0) scale(0.956 1)" x="-4.5" y="17.6">8</text><text transform="translate(67.5 0) scale(0.956 1)" x="-4.5" y="17.6">0</text><text transform="translate(76.5 0) scale(0.956 1)" x="-4.5" y="17.6">8</text></svg>
<svg style="left:1337px;top:195px" width="40" height="22" font-family="Liberation Serif" font-size="18" fill="#000"><text transform="translate(4.5 0) scale(1.000 1)" x="-3.0" y="17.6">I</text><text transform="translate(13.5 0) scale(0.662 1)" x="-6.5" y="17.6">N</text><text transform="translate(22.5 0) scale(0.782 1)" x="-5.5" y="17.6">T</text><text transform="translate(31.5 0) scale(0.956 1)" x="-4.5" y="17.6">*</text></svg>
<div class="rc" style="left:1412px;top:195px;">双字</div>
<div style="left:1009px;top:227px;width:9px;height:1px;background:#7c7cff"></div>
<svg style="left:1020px;top:221px" width="13" height="14"><path d="M0.2 5.5 L5.5 9 L10.8 4.5 L11.4 7.5 L6.5 12.8 L1 8.5 Z" fill="#5b6cae"/><path d="M4.8 0.6 L10.8 4.5 L5.5 9 L0.2 5.5 Z" fill="#8aa7ff"/></svg>
<svg style="left:1037px;top:217px" width="22" height="22" font-family="Liberation Serif" font-size="18" fill="#000"><text transform="translate(4.5 0) scale(0.662 1)" x="-6.5" y="17.6">N</text><text transform="translate(13.5 0) scale(0.956 1)" x="-4.5" y="17.6">4</text></svg>
<svg style="left:1174px;top:217px" width="85" height="22" font-family="Liberation Serif" font-size="18" fill="#0000ff"><text transform="translate(4.5 0) scale(0.956 1)" x="-4.5" y="17.6">6</text><text transform="translate(13.5 0) scale(0.956 1)" x="-4.5" y="17.6">0</text><text transform="translate(22.5 0) scale(0.956 1)" x="-4.5" y="17.6">4</text><text transform="translate(31.5 0) scale(0.956 1)" x="-4.5" y="17.6">2</text><text transform="translate(40.5 0) scale(0.956 1)" x="-4.5" y="17.6">3</text><text transform="translate(49.5 0) scale(0.956 1)" x="-4.5" y="17.6">6</text><text transform="translate(58.5 0) scale(0.956 1)" x="-4.5" y="17.6">8</text><text transform="translate(67.5 0) scale(0.956 1)" x="-4.5" y="17.6">1</text><text transform="translate(76.5 0) scale(0.956 1)" x="-4.5" y="17.6">0</text></svg>
<svg style="left:1337px;top:217px" width="40" height="22" font-family="Liberation Serif" font-size="18" fill="#000"><text transform="translate(4.5 0) scale(1.000 1)" x="-3.0" y="17.6">I</text><text transform="translate(13.5 0) scale(0.662 1)" x="-6.5" y="17.6">N</text><text transform="translate(22.5 0) scale(0.782 1)" x="-5.5" y="17.6">T</text><text transform="translate(31.5 0) scale(0.956 1)" x="-4.5" y="17.6">*</text></svg>
<div class="rc" style="left:1412px;top:217px;">双字</div>
<div style="left:1009px;top:249px;width:9px;height:1px;background:#7c7cff"></div>
<svg style="left:1020px;top:243px" width="13" height="14"><path d="M0.2 5.5 L5.5 9 L10.8 4.5 L11.4 7.5 L6.5 12.8 L1 8.5 Z" fill="#5b6cae"/><path d="M4.8 0.6 L10.8 4.5 L5.5 9 L0.2 5.5 Z" fill="#8aa7ff"/></svg>
<svg style="left:1037px;top:239px" width="22" height="22" font-family="Liberation Serif" font-size="18" fill="#000"><text transform="translate(4.5 0) scale(0.662 1)" x="-6.5" y="17.6">N</text><text transform="translate(13.5 0) scale(0.956 1)" x="-4.5" y="17.6">5</text></svg>
<svg style="left:1174px;top:239px" width="85" height="22" font-family="Liberation Serif" font-size="18" fill="#0000ff"><text transform="translate(4.5 0) scale(0.956 1)" x="-4.5" y="17.6">6</text><text transform="translate(13.5 0) scale(0.956 1)" x="-4.5" y="17.6">0</text><text transform="translate(22.5 0) scale(0.956 1)" x="-4.5" y="17.6">4</text><text transform="translate(31.5 0) scale(0.956 1)" x="-4.5" y="17.6">2</text><text transform="translate(40.5 0) scale(0.956 1)" x="-4.5" y="17.6">3</text><text transform="translate(49.5 0) scale(0.956 1)" x="-4.5" y="17.6">6</text><text transform="translate(58.5 0) scale(0.956 1)" x="-4.5" y="17.6">8</text><text transform="translate(67.5 0) scale(0.956 1)" x="-4.5" y="17.6">1</text><text transform="translate(76.5 0) scale(0.956 1)" x="-4.5" y="17.6">2</text></svg>
<svg style="left:1337px;top:239px" width="40" height="22" font-family="Liberation Serif" font-size="18" fill="#000"><text transform="translate(4.5 0) scale(1.000 1)" x="-3.0" y="17.6">I</text><text transform="translate(13.5 0) scale(0.662 1)" x="-6.5" y="17.6">N</text><text transform="translate(22.5 0) scale(0.782 1)" x="-5.5" y="17.6">T</text><text transform="translate(31.5 0) scale(0.956 1)" x="-4.5" y="17.6">*</text></svg>
<div class="rc" style="left:1412px;top:239px;">双字</div>
<div style="left:1009px;top:271px;width:9px;height:1px;background:#7c7cff"></div>
<svg style="left:1020px;top:265px" width="13" height="14"><path d="M0.2 5.5 L5.5 9 L10.8 4.5 L11.4 7.5 L6.5 12.8 L1 8.5 Z" fill="#5b6cae"/><path d="M4.8 0.6 L10.8 4.5 L5.5 9 L0.2 5.5 Z" fill="#8aa7ff"/></svg>
<svg style="left:1037px;top:261px" width="22" height="22" font-family="Liberation Serif" font-size="18" fill="#000"><text transform="translate(4.5 0) scale(1.000 1)" x="-3.5078125" y="17.6">J</text><text transform="translate(13.5 0) scale(0.956 1)" x="-4.5" y="17.6">1</text></svg>
<svg style="left:1210px;top:261px" width="13" height="22" font-family="Liberation Serif" font-size="18" fill="#0000ff"><text transform="translate(4.5 0) scale(0.956 1)" x="-4.5" y="17.6">0</text></svg>
<svg style="left:1342px;top:261px" width="31" height="22" font-family="Liberation Serif" font-size="18" fill="#000"><text transform="translate(4.5 0) scale(1.000 1)" x="-3.0" y="17.6">I</text><text transform="translate(13.5 0) scale(0.662 1)" x="-6.5" y="17.6">N</text><text transform="translate(22.5 0) scale(0.782 1)" x="-5.5" y="17.6">T</text></svg>
<div class="rc" style="left:1412px;top:261px;">单字</div>
<div style="left:1009px;top:293px;width:9px;height:1px;background:#7c7cff"></div>
<svg style="left:1020px;top:287px" width="13" height="14"><path d="M0.2 5.5 L5.5 9 L10.8 4.5 L11.4 7.5 L6.5 12.8 L1 8.5 Z" fill="#5b6cae"/><path d="M4.8 0.6 L10.8 4.5 L5.5 9 L0.2 5.5 Z" fill="#8aa7ff"/></svg>
<svg style="left:1037px;top:283px" width="22" height="22" font-family="Liberation Serif" font-size="18" fill="#000"><text transform="translate(4.5 0) scale(1.000 1)" x="-3.5078125" y="17.6">J</text><text transform="translate(13.5 0) scale(0.956 1)" x="-4.5" y="17.6">2</text></svg>
<svg style="left:1210px;top:283px" width="13" height="22" font-family="Liberation Serif" font-size="18" fill="#0000ff"><text transform="translate(4.5 0) scale(0.956 1)" x="-4.5" y="17.6">0</text></svg>
<svg style="left:1342px;top:283px" width="31" height="22" font-family="Liberation Serif" font-size="18" fill="#000"><text transform="translate(4.5 0) scale(1.000 1)" x="-3.0" y="17.6">I</text><text transform="translate(13.5 0) scale(0.662 1)" x="-6.5" y="17.6">N</text><text transform="translate(22.5 0) scale(0.782 1)" x="-5.5" y="17.6">T</text></svg>
<div class="rc" style="left:1412px;top:283px;">单字</div>
<div style="left:1009px;top:315px;width:9px;height:1px;background:#7c7cff"></div>
<svg style="left:1020px;top:309px" width="13" height="14"><path d="M0.2 5.5 L5.5 9 L10.8 4.5 L11.4 7.5 L6.5 12.8 L1 8.5 Z" fill="#5b6cae"/><path d="M4.8 0.6 L10.8 4.5 L5.5 9 L0.2 5.5 Z" fill="#8aa7ff"/></svg>
<svg style="left:1037px;top:305px" width="22" height="22" font-family="Liberation Serif" font-size="18" fill="#000"><text transform="translate(4.5 0) scale(1.000 1)" x="-3.5078125" y="17.6">J</text><text transform="translate(13.5 0) scale(0.956 1)" x="-4.5" y="17.6">3</text></svg>
<svg style="left:1210px;top:305px" width="13" height="22" font-family="Liberation Serif" font-size="18" fill="#0000ff"><text transform="translate(4.5 0) scale(0.956 1)" x="-4.5" y="17.6">0</text></svg>
<svg style="left:1342px;top:305px" width="31" height="22" font-family="Liberation Serif" font-size="18" fill="#000"><text transform="translate(4.5 0) scale(1.000 1)" x="-3.0" y="17.6">I</text><text transform="translate(13.5 0) scale(0.662 1)" x="-6.5" y="17.6">N</text><text transform="translate(22.5 0) scale(0.782 1)" x="-5.5" y="17.6">T</text></svg>
<div class="rc" style="left:1412px;top:305px;">单字</div>
<div style="left:1009px;top:337px;width:9px;height:1px;background:#7c7cff"></div>
<svg style="left:1020px;top:331px" width="13" height="14"><path d="M0.2 5.5 L5.5 9 L10.8 4.5 L11.4 7.5 L6.5 12.8 L1 8.5 Z" fill="#5b6cae"/><path d="M4.8 0.6 L10.8 4.5 L5.5 9 L0.2 5.5 Z" fill="#8aa7ff"/></svg>
<svg style="left:1037px;top:327px" width="22" height="22" font-family="Liberation Serif" font-size="18" fill="#000"><text transform="translate(4.5 0) scale(1.000 1)" x="-3.5078125" y="17.6">J</text><text transform="translate(13.5 0) scale(0.956 1)" x="-4.5" y="17.6">4</text></svg>
<svg style="left:1210px;top:327px" width="13" height="22" font-family="Liberation Serif" font-size="18" fill="#0000ff"><text transform="translate(4.5 0) scale(0.956 1)" x="-4.5" y="17.6">0</text></svg>
<svg style="left:1342px;top:327px" width="31" height="22" font-family="Liberation Serif" font-size="18" fill="#000"><text transform="translate(4.5 0) scale(1.000 1)" x="-3.0" y="17.6">I</text><text transform="translate(13.5 0) scale(0.662 1)" x="-6.5" y="17.6">N</text><text transform="translate(22.5 0) scale(0.782 1)" x="-5.5" y="17.6">T</text></svg>
<div class="rc" style="left:1412px;top:327px;">单字</div>
<div style="left:1009px;top:359px;width:9px;height:1px;background:#7c7cff"></div>
<svg style="left:1020px;top:353px" width="13" height="14"><path d="M0.2 5.5 L5.5 9 L10.8 4.5 L11.4 7.5 L6.5 12.8 L1 8.5 Z" fill="#5b6cae"/><path d="M4.8 0.6 L10.8 4.5 L5.5 9 L0.2 5.5 Z" fill="#8aa7ff"/></svg>
<svg style="left:1037px;top:349px" width="22" height="22" font-family="Liberation Serif" font-size="18" fill="#000"><text transform="translate(4.5 0) scale(1.000 1)" x="-3.5078125" y="17.6">J</text><text transform="translate(13.5 0) scale(0.956 1)" x="-4.5" y="17.6">5</text></svg>
<svg style="left:1210px;top:349px" width="13" height="22" font-family="Liberation Serif" font-size="18" fill="#0000ff"><text transform="translate(4.5 0) scale(0.956 1)" x="-4.5" y="17.6">0</text></svg>
<svg style="left:1342px;top:349px" width="31" height="22" font-family="Liberation Serif" font-size="18" fill="#000"><text transform="translate(4.5 0) scale(1.000 1)" x="-3.0" y="17.6">I</text><text transform="translate(13.5 0) scale(0.662 1)" x="-6.5" y="17.6">N</text><text transform="translate(22.5 0) scale(0.782 1)" x="-5.5" y="17.6">T</text></svg>
<div class="rc" style="left:1412px;top:349px;">单字</div>
<div style="left:1009px;top:381px;width:9px;height:1px;background:#7c7cff"></div>
<svg style="left:1020px;top:375px" width="13" height="14"><path d="M0.2 5.5 L5.5 9 L10.8 4.5 L11.4 7.5 L6.5 12.8 L1 8.5 Z" fill="#5b6cae"/><path d="M4.8 0.6 L10.8 4.5 L5.5 9 L0.2 5.5 Z" fill="#8aa7ff"/></svg>
<svg style="left:1037px;top:371px" width="49" height="22" font-family="Liberation Serif" font-size="18" fill="#000"><text transform="translate(4.5 0) scale(0.956 1)" x="-4.5" y="17.6">b</text><text transform="translate(13.5 0) scale(0.956 1)" x="-4.5" y="17.6">o</text><text transform="translate(22.5 0) scale(0.956 1)" x="-4.5" y="17.6">o</text><text transform="translate(31.5 0) scale(1.000 1)" x="-2.5078125" y="17.6">l</text><text transform="translate(40.5 0) scale(0.956 1)" x="-4.5" y="17.6">1</text></svg>
<svg style="left:1192px;top:371px" width="49" height="22" font-family="Liberation Serif" font-size="18" fill="#0000ff"><text transform="translate(4.5 0) scale(0.859 1)" x="-5.0078125" y="17.6">F</text><text transform="translate(13.5 0) scale(0.662 1)" x="-6.5" y="17.6">A</text><text transform="translate(22.5 0) scale(0.782 1)" x="-5.5" y="17.6">L</text><text transform="translate(31.5 0) scale(0.859 1)" x="-5.0078125" y="17.6">S</text><text transform="translate(40.5 0) scale(0.782 1)" x="-5.5" y="17.6">E</text></svg>
<svg style="left:1337px;top:371px" width="40" height="22" font-family="Liberation Serif" font-size="18" fill="#000"><text transform="translate(4.5 0) scale(0.716 1)" x="-6.0078125" y="17.6">B</text><text transform="translate(13.5 0) scale(0.662 1)" x="-6.5" y="17.6">O</text><text transform="translate(22.5 0) scale(0.662 1)" x="-6.5" y="17.6">O</text><text transform="translate(31.5 0) scale(0.782 1)" x="-5.5" y="17.6">L</text></svg>
<div class="rc" style="left:1412px;top:371px;">半字</div>
<div style="left:1009px;top:107px;width:1px;height:277px;background:#7c7cff"></div>
<div style="left:992px;top:403px;width:9px;height:1px;background:#7c7cff"></div>
<svg style="left:1003px;top:397.7px" width="13" height="14"><path d="M0.2 5.5 L5.5 9 L10.8 4.5 L11.4 7.5 L6.5 12.8 L1 8.5 Z" fill="#5b6cae"/><path d="M4.8 0.6 L10.8 4.5 L5.5 9 L0.2 5.5 Z" fill="#8aa7ff"/></svg>
<svg style="left:1020px;top:393px" width="67" height="22" font-family="Liberation Serif" font-size="18" fill="#000"><text transform="translate(4.5 0) scale(0.782 1)" x="-5.5" y="17.6">T</text><text transform="translate(13.5 0) scale(0.782 1)" x="-5.5" y="17.6">E</text><text transform="translate(22.5 0) scale(0.859 1)" x="-5.0078125" y="17.6">S</text><text transform="translate(31.5 0) scale(0.782 1)" x="-5.5" y="17.6">T</text><text transform="translate(40.5 0) scale(0.956 1)" x="-4.5" y="17.6">_</text><text transform="translate(49.5 0) scale(1.000 1)" x="-3.0" y="17.6">I</text><text transform="translate(58.5 0) scale(0.662 1)" x="-6.5" y="17.6">N</text></svg>
<svg style="left:1210px;top:393px" width="13" height="22" font-family="Liberation Serif" font-size="18" fill="#0000ff"><text transform="translate(4.5 0) scale(0.956 1)" x="-4.5" y="17.6">0</text></svg>
<svg style="left:1342px;top:393px" width="31" height="22" font-family="Liberation Serif" font-size="18" fill="#000"><text transform="translate(4.5 0) scale(1.000 1)" x="-3.0" y="17.6">I</text><text transform="translate(13.5 0) scale(0.662 1)" x="-6.5" y="17.6">N</text><text transform="translate(22.5 0) scale(0.782 1)" x="-5.5" y="17.6">T</text></svg>
<div class="rc" style="left:1412px;top:393px;">单字</div>
<div style="left:992px;top:425px;width:9px;height:1px;background:#7c7cff"></div>
<svg style="left:1003px;top:419.7px" width="13" height="14"><path d="M0.2 5.5 L5.5 9 L10.8 4.5 L11.4 7.5 L6.5 12.8 L1 8.5 Z" fill="#5b6cae"/><path d="M4.8 0.6 L10.8 4.5 L5.5 9 L0.2 5.5 Z" fill="#8aa7ff"/></svg>
<svg style="left:1020px;top:415px" width="76" height="22" font-family="Liberation Serif" font-size="18" fill="#000"><text transform="translate(4.5 0) scale(0.782 1)" x="-5.5" y="17.6">T</text><text transform="translate(13.5 0) scale(0.782 1)" x="-5.5" y="17.6">E</text><text transform="translate(22.5 0) scale(0.859 1)" x="-5.0078125" y="17.6">S</text><text transform="translate(31.5 0) scale(0.782 1)" x="-5.5" y="17.6">T</text><text transform="translate(40.5 0) scale(0.956 1)" x="-4.5" y="17.6">_</text><text transform="translate(49.5 0) scale(0.662 1)" x="-6.5" y="17.6">O</text><text transform="translate(58.5 0) scale(0.662 1)" x="-6.5" y="17.6">U</text><text transform="translate(67.5 0) scale(0.782 1)" x="-5.5" y="17.6">T</text></svg>
<svg style="left:1210px;top:415px" width="13" height="22" font-family="Liberation Serif" font-size="18" fill="#0000ff"><text transform="translate(4.5 0) scale(0.956 1)" x="-4.5" y="17.6">0</text></svg>
<svg style="left:1342px;top:415px" width="31" height="22" font-family="Liberation Serif" font-size="18" fill="#000"><text transform="translate(4.5 0) scale(1.000 1)" x="-3.0" y="17.6">I</text><text transform="translate(13.5 0) scale(0.662 1)" x="-6.5" y="17.6">N</text><text transform="translate(22.5 0) scale(0.782 1)" x="-5.5" y="17.6">T</text></svg>
<div class="rc" style="left:1412px;top:415px;">单字</div>
<div style="left:992px;top:447px;width:9px;height:1px;background:#7c7cff"></div>
<svg style="left:1003px;top:441.7px" width="13" height="14"><path d="M0.2 5.5 L5.5 9 L10.8 4.5 L11.4 7.5 L6.5 12.8 L1 8.5 Z" fill="#5b6cae"/><path d="M4.8 0.6 L10.8 4.5 L5.5 9 L0.2 5.5 Z" fill="#8aa7ff"/></svg>
<svg style="left:1020px;top:437px" width="67" height="22" font-family="Liberation Serif" font-size="18" fill="#000"><text transform="translate(4.5 0) scale(0.782 1)" x="-5.5" y="17.6">T</text><text transform="translate(13.5 0) scale(0.782 1)" x="-5.5" y="17.6">E</text><text transform="translate(22.5 0) scale(0.859 1)" x="-5.0078125" y="17.6">S</text><text transform="translate(31.5 0) scale(0.782 1)" x="-5.5" y="17.6">T</text><text transform="translate(40.5 0) scale(0.956 1)" x="-4.5" y="17.6">_</text><text transform="translate(49.5 0) scale(0.662 1)" x="-6.5" y="17.6">N</text><text transform="translate(58.5 0) scale(0.956 1)" x="-4.5" y="17.6">1</text></svg>
<svg style="left:1210px;top:437px" width="13" height="22" font-family="Liberation Serif" font-size="18" fill="#0000ff"><text transform="translate(4.5 0) scale(0.956 1)" x="-4.5" y="17.6">0</text></svg>
<svg style="left:1342px;top:437px" width="31" height="22" font-family="Liberation Serif" font-size="18" fill="#000"><text transform="translate(4.5 0) scale(1.000 1)" x="-3.0" y="17.6">I</text><text transform="translate(13.5 0) scale(0.662 1)" x="-6.5" y="17.6">N</text><text transform="translate(22.5 0) scale(0.782 1)" x="-5.5" y="17.6">T</text></svg>
<div class="rc" style="left:1412px;top:437px;">单字</div>
<div style="left:992px;top:469px;width:9px;height:1px;background:#7c7cff"></div>
<svg style="left:1003px;top:463.7px" width="13" height="14"><path d="M0.2 5.5 L5.5 9 L10.8 4.5 L11.4 7.5 L6.5 12.8 L1 8.5 Z" fill="#5b6cae"/><path d="M4.8 0.6 L10.8 4.5 L5.5 9 L0.2 5.5 Z" fill="#8aa7ff"/></svg>
<svg style="left:1020px;top:459px" width="67" height="22" font-family="Liberation Serif" font-size="18" fill="#000"><text transform="translate(4.5 0) scale(0.782 1)" x="-5.5" y="17.6">T</text><text transform="translate(13.5 0) scale(0.782 1)" x="-5.5" y="17.6">E</text><text transform="translate(22.5 0) scale(0.859 1)" x="-5.0078125" y="17.6">S</text><text transform="translate(31.5 0) scale(0.782 1)" x="-5.5" y="17.6">T</text><text transform="translate(40.5 0) scale(0.956 1)" x="-4.5" y="17.6">_</text><text transform="translate(49.5 0) scale(0.662 1)" x="-6.5" y="17.6">N</text><text transform="translate(58.5 0) scale(0.956 1)" x="-4.5" y="17.6">2</text></svg>
<svg style="left:1210px;top:459px" width="13" height="22" font-family="Liberation Serif" font-size="18" fill="#0000ff"><text transform="translate(4.5 0) scale(0.956 1)" x="-4.5" y="17.6">0</text></svg>
<svg style="left:1342px;top:459px" width="31" height="22" font-family="Liberation Serif" font-size="18" fill="#000"><text transform="translate(4.5 0) scale(1.000 1)" x="-3.0" y="17.6">I</text><text transform="translate(13.5 0) scale(0.662 1)" x="-6.5" y="17.6">N</text><text transform="translate(22.5 0) scale(0.782 1)" x="-5.5" y="17.6">T</text></svg>
<div class="rc" style="left:1412px;top:459px;">单字</div>
<div style="left:992px;top:491px;width:9px;height:1px;background:#7c7cff"></div>
<svg style="left:1003px;top:485.7px" width="13" height="14"><path d="M0.2 5.5 L5.5 9 L10.8 4.5 L11.4 7.5 L6.5 12.8 L1 8.5 Z" fill="#5b6cae"/><path d="M4.8 0.6 L10.8 4.5 L5.5 9 L0.2 5.5 Z" fill="#8aa7ff"/></svg>
<svg style="left:1020px;top:481px" width="67" height="22" font-family="Liberation Serif" font-size="18" fill="#000"><text transform="translate(4.5 0) scale(0.782 1)" x="-5.5" y="17.6">T</text><text transform="translate(13.5 0) scale(0.782 1)" x="-5.5" y="17.6">E</text><text transform="translate(22.5 0) scale(0.859 1)" x="-5.0078125" y="17.6">S</text><text transform="translate(31.5 0) scale(0.782 1)" x="-5.5" y="17.6">T</text><text transform="translate(40.5 0) scale(0.956 1)" x="-4.5" y="17.6">_</text><text transform="translate(49.5 0) scale(0.662 1)" x="-6.5" y="17.6">N</text><text transform="translate(58.5 0) scale(0.956 1)" x="-4.5" y="17.6">3</text></svg>
<svg style="left:1210px;top:481px" width="13" height="22" font-family="Liberation Serif" font-size="18" fill="#0000ff"><text transform="translate(4.5 0) scale(0.956 1)" x="-4.5" y="17.6">0</text></svg>
<svg style="left:1342px;top:481px" width="31" height="22" font-family="Liberation Serif" font-size="18" fill="#000"><text transform="translate(4.5 0) scale(1.000 1)" x="-3.0" y="17.6">I</text><text transform="translate(13.5 0) scale(0.662 1)" x="-6.5" y="17.6">N</text><text transform="translate(22.5 0) scale(0.782 1)" x="-5.5" y="17.6">T</text></svg>
<div class="rc" style="left:1412px;top:481px;">单字</div>
<div style="left:992px;top:513px;width:9px;height:1px;background:#7c7cff"></div>
<svg style="left:1003px;top:507.7px" width="13" height="14"><path d="M0.2 5.5 L5.5 9 L10.8 4.5 L11.4 7.5 L6.5 12.8 L1 8.5 Z" fill="#5b6cae"/><path d="M4.8 0.6 L10.8 4.5 L5.5 9 L0.2 5.5 Z" fill="#8aa7ff"/></svg>
<svg style="left:1020px;top:503px" width="67" height="22" font-family="Liberation Serif" font-size="18" fill="#000"><text transform="translate(4.5 0) scale(0.782 1)" x="-5.5" y="17.6">T</text><text transform="translate(13.5 0) scale(0.782 1)" x="-5.5" y="17.6">E</text><text transform="translate(22.5 0) scale(0.859 1)" x="-5.0078125" y="17.6">S</text><text transform="translate(31.5 0) scale(0.782 1)" x="-5.5" y="17.6">T</text><text transform="translate(40.5 0) scale(0.956 1)" x="-4.5" y="17.6">_</text><text transform="translate(49.5 0) scale(0.662 1)" x="-6.5" y="17.6">N</text><text transform="translate(58.5 0) scale(0.956 1)" x="-4.5" y="17.6">4</text></svg>
<svg style="left:1210px;top:503px" width="13" height="22" font-family="Liberation Serif" font-size="18" fill="#0000ff"><text transform="translate(4.5 0) scale(0.956 1)" x="-4.5" y="17.6">0</text></svg>
<svg style="left:1342px;top:503px" width="31" height="22" font-family="Liberation Serif" font-size="18" fill="#000"><text transform="translate(4.5 0) scale(1.000 1)" x="-3.0" y="17.6">I</text><text transform="translate(13.5 0) scale(0.662 1)" x="-6.5" y="17.6">N</text><text transform="translate(22.5 0) scale(0.782 1)" x="-5.5" y="17.6">T</text></svg>
<div class="rc" style="left:1412px;top:503px;">单字</div>
<div style="left:992px;top:535px;width:9px;height:1px;background:#7c7cff"></div>
<svg style="left:1003px;top:529.7px" width="13" height="14"><path d="M0.2 5.5 L5.5 9 L10.8 4.5 L11.4 7.5 L6.5 12.8 L1 8.5 Z" fill="#5b6cae"/><path d="M4.8 0.6 L10.8 4.5 L5.5 9 L0.2 5.5 Z" fill="#8aa7ff"/></svg>
<svg style="left:1020px;top:525px" width="67" height="22" font-family="Liberation Serif" font-size="18" fill="#000"><text transform="translate(4.5 0) scale(0.782 1)" x="-5.5" y="17.6">T</text><text transform="translate(13.5 0) scale(0.782 1)" x="-5.5" y="17.6">E</text><text transform="translate(22.5 0) scale(0.859 1)" x="-5.0078125" y="17.6">S</text><text transform="translate(31.5 0) scale(0.782 1)" x="-5.5" y="17.6">T</text><text transform="translate(40.5 0) scale(0.956 1)" x="-4.5" y="17.6">_</text><text transform="translate(49.5 0) scale(0.662 1)" x="-6.5" y="17.6">N</text><text transform="translate(58.5 0) scale(0.956 1)" x="-4.5" y="17.6">5</text></svg>
<svg style="left:1210px;top:525px" width="13" height="22" font-family="Liberation Serif" font-size="18" fill="#0000ff"><text transform="translate(4.5 0) scale(0.956 1)" x="-4.5" y="17.6">0</text></svg>
<svg style="left:1342px;top:525px" width="31" height="22" font-family="Liberation Serif" font-size="18" fill="#000"><text transform="translate(4.5 0) scale(1.000 1)" x="-3.0" y="17.6">I</text><text transform="translate(13.5 0) scale(0.662 1)" x="-6.5" y="17.6">N</text><text transform="translate(22.5 0) scale(0.782 1)" x="-5.5" y="17.6">T</text></svg>
<div class="rc" style="left:1412px;top:525px;">单字</div>
<div style="left:992px;top:104px;width:1px;height:454px;background:#7c7cff"></div>
<div style="left:992px;top:557px;width:10px;height:1px;background:#7c7cff"></div>
<div style="left:992px;top:106px;width:1px;height:1px;background:#ececec"></div>
<div style="left:992px;top:128px;width:1px;height:1px;background:#ececec"></div>
<div style="left:992px;top:150px;width:1px;height:1px;background:#ececec"></div>
<div style="left:992px;top:172px;width:1px;height:1px;background:#ececec"></div>
<div style="left:992px;top:194px;width:1px;height:1px;background:#ececec"></div>
<div style="left:992px;top:216px;width:1px;height:1px;background:#ececec"></div>
<div style="left:992px;top:238px;width:1px;height:1px;background:#ececec"></div>
<div style="left:992px;top:260px;width:1px;height:1px;background:#ececec"></div>
<div style="left:992px;top:282px;width:1px;height:1px;background:#ececec"></div>
<div style="left:992px;top:304px;width:1px;height:1px;background:#ececec"></div>
<div style="left:992px;top:326px;width:1px;height:1px;background:#ececec"></div>
<div style="left:992px;top:348px;width:1px;height:1px;background:#ececec"></div>
<div style="left:992px;top:370px;width:1px;height:1px;background:#ececec"></div>
<div style="left:992px;top:392px;width:1px;height:1px;background:#ececec"></div>
<div style="left:992px;top:414px;width:1px;height:1px;background:#ececec"></div>
<div style="left:992px;top:436px;width:1px;height:1px;background:#ececec"></div>
<div style="left:992px;top:458px;width:1px;height:1px;background:#ececec"></div>
<div style="left:992px;top:480px;width:1px;height:1px;background:#ececec"></div>
<div style="left:992px;top:502px;width:1px;height:1px;background:#ececec"></div>
<div style="left:992px;top:524px;width:1px;height:1px;background:#ececec"></div>
<div style="left:992px;top:546px;width:1px;height:1px;background:#ececec"></div>
<div style="left:1009px;top:128px;width:1px;height:1px;background:#ececec"></div>
<div style="left:1009px;top:150px;width:1px;height:1px;background:#ececec"></div>
<div style="left:1009px;top:172px;width:1px;height:1px;background:#ececec"></div>
<div style="left:1009px;top:194px;width:1px;height:1px;background:#ececec"></div>
<div style="left:1009px;top:216px;width:1px;height:1px;background:#ececec"></div>
<div style="left:1009px;top:238px;width:1px;height:1px;background:#ececec"></div>
<div style="left:1009px;top:260px;width:1px;height:1px;background:#ececec"></div>
<div style="left:1009px;top:282px;width:1px;height:1px;background:#ececec"></div>
<div style="left:1009px;top:304px;width:1px;height:1px;background:#ececec"></div>
<div style="left:1009px;top:326px;width:1px;height:1px;background:#ececec"></div>
<div style="left:1009px;top:348px;width:1px;height:1px;background:#ececec"></div>
<div style="left:1009px;top:370px;width:1px;height:1px;background:#ececec"></div>
<div style="left:1009px;top:392px;width:1px;height:1px;background:#ececec"></div>
</body></html>
